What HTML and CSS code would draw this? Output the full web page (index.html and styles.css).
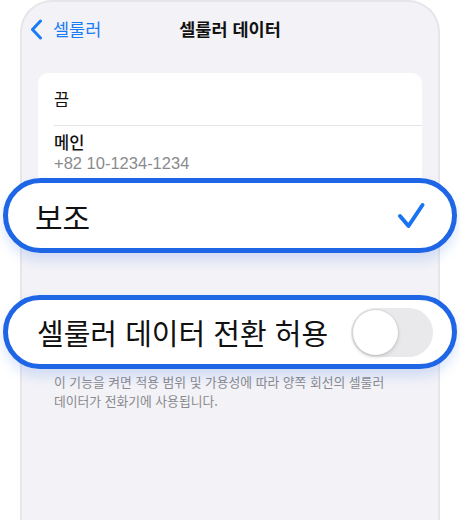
FILE: index.html
```html
<!DOCTYPE html>
<html lang="ko">
<head>
<meta charset="utf-8">
<title>셀룰러 데이터</title>
<link rel="stylesheet" href="styles.css">
</head>
<body>
  <div class="phone">
    <header class="nav">
      <a class="back" href="#">
        <svg class="chevron" width="13" height="21" viewBox="0 0 13 21" aria-hidden="true">
          <path d="M10.5 2 L2.5 10.5 L10.5 19" fill="none" stroke="currentColor" stroke-width="3" stroke-linecap="round" stroke-linejoin="round"/>
        </svg>
        <span>셀룰러</span>
      </a>
      <h1 class="title">셀룰러 데이터</h1>
      <span></span>
    </header>

    <section class="card">
      <div class="row row-off">끔</div>
      <div class="sep"></div>
      <div class="row row-line">
        <div class="line-name">메인</div>
        <div class="line-number">+82 10-1234-1234</div>
      </div>
      <div class="pill pill-choice">
        <span class="pill-label">보조</span>
        <svg class="check" width="30" height="30" viewBox="0 0 30 30" aria-hidden="true">
          <path d="M4 15 L12.5 25 L26.5 4" fill="none" stroke="currentColor" stroke-width="4" stroke-linecap="round" stroke-linejoin="round"/>
        </svg>
      </div>
    </section>

    <div class="pill pill-switch">
      <span class="pill-label">셀룰러 데이터 전환 허용</span>
      <span class="toggle"><span class="knob"></span></span>
    </div>

    <p class="footer">이 기능을 켜면 적용 범위 및 가용성에 따라 양쪽 회선의 셀룰러<br>데이터가 전화기에 사용됩니다.</p>
  </div>
</body>
</html>
```

FILE: styles.css
```css
* {
  box-sizing: border-box;
}

html, body {
  margin: 0;
  height: 520px;
  overflow: hidden;
  background: #ffffff;
  font-family: "Noto Sans CJK KR", "Noto Sans", sans-serif;
  color: #111111;
}

.phone {
  margin: 0 20px;
  height: 520px;
  border: 2px solid #e6e6ea;
  border-bottom: none;
  border-radius: 32px 32px 0 0;
  background: #f2f2f7;
}

/* navigation bar */
.nav {
  height: 54px;
  display: grid;
  grid-template-columns: 1fr auto 1fr;
  align-items: center;
}

.back {
  display: flex;
  align-items: center;
  gap: 10px;
  padding-left: 8px;
  color: #1a7cf5;
  text-decoration: none;
  font-size: 17.5px;
  line-height: 22px;
}

.chevron {
  display: block;
}

.title {
  margin: 0;
  font-size: 17.5px;
  font-weight: 600;
  line-height: 22px;
}

/* grouped list */
.card {
  margin: 17px 16px 0;
  background: #ffffff;
  border-radius: 10px;
}

.row {
  padding: 0 16px;
  font-size: 16.5px;
}

.row-off {
  height: 52px;
  display: flex;
  align-items: center;
}

.sep {
  height: 1px;
  margin-left: 16px;
  background: #e4e4e8;
}

.row-line {
  height: 52px;
  padding-top: 6px;
}

.line-name {
  line-height: 21px;
  font-weight: 500;
}

.line-number {
  font-family: "Liberation Sans", "Noto Sans", sans-serif;
  font-size: 16.5px;
  line-height: 21px;
  color: #8a8a8e;
}

/* highlighted call-out rows */
.pill {
  display: flex;
  align-items: center;
  justify-content: space-between;
  background: #ffffff;
  border: 5px solid #1f66e6;
  border-radius: 40px;
  box-shadow: 0 7px 12px rgba(31, 102, 230, 0.16);
  position: relative;
}

.pill-label {
  font-size: 29px;
  line-height: 38px;
  color: #111111;
}

.pill-choice {
  height: 75px;
  margin: 0 -35px;
  padding: 0 26px 0 27px;
}

.pill-choice .pill-label {
  font-size: 30px;
}

.check {
  display: block;
  color: #1a73f0;
}

.pill-switch {
  height: 74px;
  margin: 42px -19px 0;
  padding: 0 19px 0 29px;
}

.toggle {
  width: 82px;
  height: 49px;
  border-radius: 25px;
  background: #e9e9eb;
  padding: 2px;
  display: flex;
}

.knob {
  width: 45px;
  height: 45px;
  border-radius: 50%;
  background: #ffffff;
  box-shadow: 0 2px 4px rgba(0, 0, 0, 0.14), 0 0 0 1px rgba(0, 0, 0, 0.05);
}

.footer {
  margin: 0 16px;
  padding: 3px 16px;
  font-size: 12.8px;
  line-height: 19px;
  color: #8a8a8e;
}
```
